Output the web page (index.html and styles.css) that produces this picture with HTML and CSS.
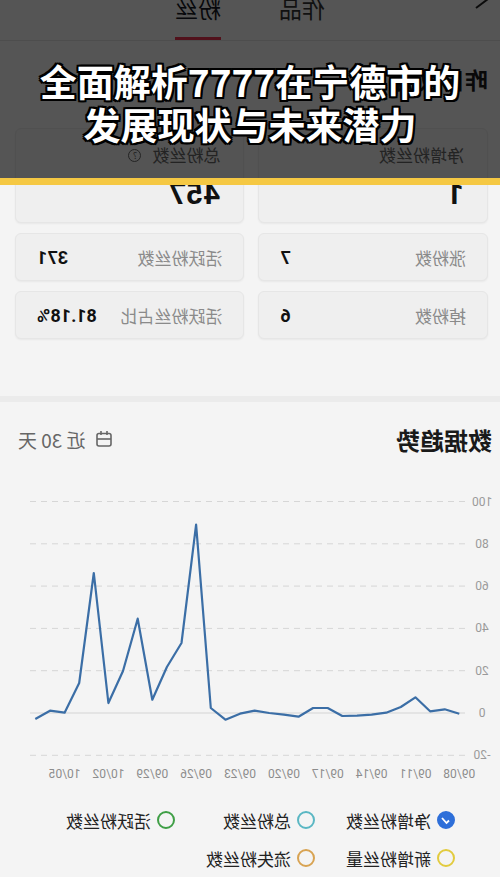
FILE: index.html
```html
<!DOCTYPE html>
<html lang="zh-CN">
<head>
    <meta charset="UTF-8">
    <meta name="viewport" content="width=device-width, initial-scale=1.0">
    <title>粉丝数据</title>
    <link rel="stylesheet" href="styles.css">
</head>
<body>
    <div class="page">
        <div class="mirror">
            <header class="topbar">
                <span class="back">
                    <svg width="26" height="22" viewBox="0 0 26 22"><polyline points="22,-10 6,2 22,14" fill="none" stroke="#222" stroke-width="2"/></svg>
                </span>
                <nav class="tabs">
                    <span class="tab">作品</span>
                    <span class="tab active">粉丝</span>
                </nav>
            </header>

            <section class="daily">
                <div class="daily-head">
                    <h2>昨日数据</h2>
                </div>
                <div class="big-cards">
                    <div class="card big">
                        <div class="label">净增粉丝数</div>
                        <div class="num">1</div>
                    </div>
                    <div class="card big">
                        <div class="label">总粉丝数 <i class="help">?</i></div>
                        <div class="num">457</div>
                    </div>
                </div>
                <div class="small-cards">
                    <div class="card row"><span class="label">涨粉数</span><b>7</b></div>
                    <div class="card row"><span class="label">活跃粉丝数</span><b>371</b></div>
                    <div class="card row"><span class="label">掉粉数</span><b>6</b></div>
                    <div class="card row"><span class="label">活跃粉丝占比</span><b>81.18%</b></div>
                </div>
            </section>

            <div class="band"></div>

            <section class="trend">
                <div class="trend-head">
                    <h2>数据趋势</h2>
                    <span class="range">
                        <svg width="18" height="18" viewBox="0 0 18 18"><rect x="2" y="3.5" width="14" height="12.5" rx="2" fill="none" stroke="#666" stroke-width="1.6"/><line x1="6" y1="1" x2="6" y2="5" stroke="#666" stroke-width="1.6"/><line x1="12" y1="1" x2="12" y2="5" stroke="#666" stroke-width="1.6"/><line x1="2" y1="9" x2="16" y2="9" stroke="#666" stroke-width="1.6"/></svg>
                        近 30 天
                    </span>
                </div>

                <svg class="chart" width="500" height="320" viewBox="0 0 500 320">
                    <g class="grid">
                        <line x1="35" y1="23.5" x2="473" y2="23.5"/>
                        <line x1="35" y1="65.8" x2="473" y2="65.8"/>
                        <line x1="35" y1="108.1" x2="473" y2="108.1"/>
                        <line x1="35" y1="150.4" x2="473" y2="150.4"/>
                        <line x1="35" y1="192.7" x2="473" y2="192.7"/>
                        <line x1="35" y1="277.3" x2="473" y2="277.3"/>
                    </g>
                    <line class="zero" x1="35" y1="235" x2="470" y2="235"/>
                    <g class="ylabels">
                        <text x="18" y="23.5">100</text>
                        <text x="18" y="65.8">80</text>
                        <text x="18" y="108.1">60</text>
                        <text x="18" y="150.4">40</text>
                        <text x="18" y="192.7">20</text>
                        <text x="18" y="235">0</text>
                        <text x="18" y="277.3">-20</text>
                    </g>
                    <g class="xlabels">
                        <text x="40.7" y="296">09/08</text>
                        <text x="84.6" y="296">09/11</text>
                        <text x="128.4" y="296">09/14</text>
                        <text x="172.3" y="296">09/17</text>
                        <text x="216.1" y="296">09/20</text>
                        <text x="260" y="296">09/23</text>
                        <text x="303.9" y="296">09/26</text>
                        <text x="347.7" y="296">09/29</text>
                        <text x="391.6" y="296">10/02</text>
                        <text x="435.4" y="296">10/05</text>
                    </g>
                    <polyline class="series" points="40.7,235.7 55.3,231.3 69.9,233.3 84.6,219.3 99.2,229 113.8,234.7 128.4,236.7 143,237.7 157.7,238 172.3,230 186.9,230 201.5,238.7 216.1,236.7 230.8,235 245.4,232.7 260,235.7 274.6,241.7 289.2,230 303.9,46.7 318.5,165 333.1,189 347.7,221.7 362.3,140.7 377,193 391.6,225 406.2,95 420.8,205 435.4,234.7 450,232.7 464.7,241"/>
                </svg>

                <div class="legend">
                    <span class="item"><i class="dot checked"><svg width="11" height="11" viewBox="0 0 11 11"><polyline points="2,5.5 4.5,8 9,3" fill="none" stroke="#fff" stroke-width="1.8"/></svg></i>净增粉丝数</span>
                    <span class="item"><i class="dot teal"></i>总粉丝数</span>
                    <span class="item"><i class="dot green"></i>活跃粉丝数</span>
                    <span class="item"><i class="dot yellow"></i>新增粉丝量</span>
                    <span class="item"><i class="dot orange"></i>流失粉丝数</span>
                </div>
            </section>
        </div>

        <div class="cover">
            <p>全面解析7777在宁德市的</p>
            <p>发展现状与未来潜力</p>
        </div>
    </div>
</body>
</html>
```

FILE: styles.css
```css
body {
    margin: 0;
    padding: 0;
    font-family: 'Roboto', 'Noto Sans CJK SC', sans-serif;
    background-color: #f4f4f4;
}
.page {
    position: relative;
    width: 500px;
    height: 877px;
    overflow: hidden;
    background-color: #f4f4f4;
}
.mirror {
    transform: scaleX(-1);
}

/* top tabs */
.topbar {
    display: grid;
    grid-template-columns: 1fr auto 1fr;
    margin-top: -6px;
    border-bottom: 1px solid #dcdcdc;
}
.back {
    padding-left: 2px;
}
.back svg {
    display: block;
}
.tabs {
    display: flex;
    gap: 58px;
}
.tab {
    font-family: 'Noto Sans CJK SC', sans-serif;
    font-size: 23px;
    line-height: 28px;
    padding-bottom: 15px;
    border-bottom: 3px solid transparent;
    color: #333;
}
.tab.active {
    color: #161823;
    border-bottom-color: #e8314f;
}

/* yesterday */
.daily {
    padding: 23px 15px 57px 12px;
}
.daily-head {
    display: flex;
    justify-content: space-between;
    align-items: center;
    margin-bottom: 34px;
}
.daily-head h2 {
    margin: 0;
    font-family: 'Noto Sans CJK SC', sans-serif;
    font-size: 23px;
    line-height: 30px;
    font-weight: 700;
    color: #1c1c1c;
}
.card {
    background-color: #efefef;
    border: 1px solid #e6e6e6;
    border-radius: 6px;
    box-shadow: 0 1px 2px rgba(0, 0, 0, 0.05);
}
.big-cards {
    display: grid;
    grid-template-columns: 1fr 1fr;
    gap: 14px;
}
.card.big {
    height: 95px;
    padding: 14px 23px 0;
    box-sizing: border-box;
}
.label {
    font-family: 'Noto Sans CJK SC', sans-serif;
    font-size: 17px;
    color: #8a8a8a;
}
.card.big .label {
    display: flex;
    align-items: center;
    gap: 11px;
    line-height: 24px;
    color: #666;
}
.help {
    display: inline-flex;
    align-items: center;
    justify-content: center;
    width: 11px;
    height: 11px;
    border: 1px solid #666;
    border-radius: 50%;
    font-style: normal;
    font-size: 9px;
    line-height: 1;
}
.num {
    margin-top: 10px;
    font-size: 30px;
    line-height: 34px;
    font-weight: 700;
    color: #111;
}
.small-cards {
    display: grid;
    grid-template-columns: 1fr 1fr;
    gap: 10px 14px;
    margin-top: 10px;
}
.card.row {
    height: 48px;
    box-sizing: border-box;
    display: flex;
    align-items: center;
    justify-content: space-between;
    padding: 0 21px;
}
.card.row b {
    font-size: 18px;
    font-weight: 700;
    color: #111;
}

.band {
    height: 6px;
    background-color: #ebebeb;
}

/* trend */
.trend {
    padding-top: 19px;
}
.trend-head {
    display: flex;
    justify-content: space-between;
    align-items: center;
    height: 36px;
    padding: 0 18px 0 8px;
}
.trend-head h2 {
    margin: 0;
    font-family: 'Noto Sans CJK SC', sans-serif;
    font-size: 24px;
    font-weight: 700;
    color: #1a1a1a;
}
.range {
    display: flex;
    align-items: center;
    gap: 9px;
    font-family: 'Noto Sans CJK SC', sans-serif;
    font-size: 19px;
    color: #666;
}
.chart {
    display: block;
    margin-top: 21px;
}
.grid line {
    stroke: #d6d6d6;
    stroke-width: 1;
    stroke-dasharray: 6 5;
}
.zero {
    stroke: #d4d4d4;
    stroke-width: 1.2;
}
.ylabels text,
.xlabels text {
    font-family: 'Roboto', sans-serif;
    font-size: 12px;
    fill: #9a9a9a;
    text-anchor: middle;
    dominant-baseline: central;
}
.xlabels text {
    fill: #8c8c8c;
}
.series {
    fill: none;
    stroke: #3b6ea6;
    stroke-width: 2.2;
    stroke-linejoin: round;
}
.legend {
    display: grid;
    grid-template-columns: 140px 140px 140px;
    grid-auto-rows: 38px;
    margin-top: 3px;
    padding-left: 45px;
}
.item {
    display: flex;
    align-items: center;
    gap: 6px;
    font-family: 'Noto Sans CJK SC', sans-serif;
    font-size: 17px;
    color: #222;
}
.dot {
    width: 14px;
    height: 14px;
    border: 2px solid #999;
    border-radius: 50%;
    display: inline-flex;
    align-items: center;
    justify-content: center;
}
.dot.checked {
    background-color: #2e6fd9;
    border-color: #2e6fd9;
}
.dot.teal { border-color: #5ab7c3; }
.dot.green { border-color: #3f9f46; }
.dot.yellow { border-color: #e2cb3e; }
.dot.orange { border-color: #d8a352; }

/* title cover */
.cover {
    position: absolute;
    top: 0;
    left: 0;
    right: 0;
    height: 185px;
    box-sizing: border-box;
    padding-top: 60px;
    background-color: rgba(0, 0, 0, 0.65);
    border-bottom: 7px solid #f5c843;
    text-align: center;
}
.cover p {
    margin: 0;
    font-family: 'Noto Sans CJK SC', sans-serif;
    font-size: 37px;
    line-height: 43px;
    font-weight: 700;
    color: #fff;
    text-shadow: 2px 0 #000, -2px 0 #000, 0 2px #000, 0 -2px #000,
        2px 2px #000, -2px -2px #000, 2px -2px #000, -2px 2px #000;
}
```
